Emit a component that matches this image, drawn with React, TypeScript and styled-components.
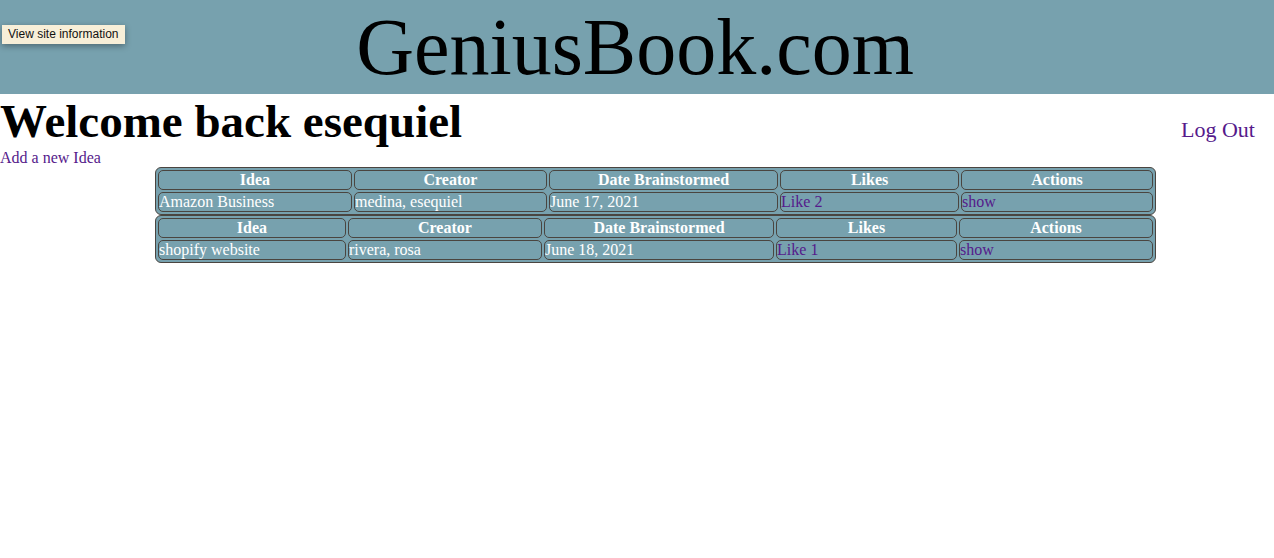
import React from "react";
import styled, { createGlobalStyle } from "styled-components";

type Idea = {
  name: string;
  creator: string;
  date: string;
  likes: number;
  cols: number[];
};

const ideas: Idea[] = [
  {
    name: "Amazon Business",
    creator: "medina, esequiel",
    date: "June 17, 2021",
    likes: 2,
    cols: [193, 192, 228, 178, 191],
  },
  {
    name: "shopify website",
    creator: "rivera, rosa",
    date: "June 18, 2021",
    likes: 1,
    cols: [187, 193, 229, 180, 193],
  },
];

const headings = ["Idea", "Creator", "Date Brainstormed", "Likes", "Actions"];

const GlobalStyle = createGlobalStyle`
  body {
    margin: 0;
    background: #ffffff;
    font-family: "Liberation Serif", "Times New Roman", serif;
    font-size: 16px;
  }
`;

const Header = styled.header`
  position: relative;
  height: 94px;
  background-color: #77a1ae;
  display: flex;
  justify-content: center;
  align-items: flex-start;
`;

const Brand = styled.div`
  font-size: 80px;
  line-height: 1;
  margin-top: 7px;
  margin-right: 4px;
  color: #000;
`;

const SiteInfo = styled.div`
  position: absolute;
  left: 2px;
  top: 25px;
  padding: 2px 6px;
  background: #f7efd8;
  font-family: "Liberation Sans", Arial, sans-serif;
  font-size: 12px;
  line-height: 15px;
  color: #111;
  box-shadow: 0 2px 6px rgba(0, 0, 0, 0.35);
`;

const TopRow = styled.div`
  display: flex;
  justify-content: space-between;
  align-items: baseline;
  padding-right: 19px;
`;

const Welcome = styled.h1`
  margin: 0;
  font-size: 47px;
  font-weight: bold;
  line-height: 55px;
`;

const Link = styled.a<{ $size?: number }>`
  color: #551a8b;
  text-decoration: none;
  font-size: ${(p) => (p.$size ? `${p.$size}px` : "inherit")};
`;

const AddLink = styled.div`
  line-height: 18px;
`;

const Table = styled.table`
  margin-left: 155px;
  width: 1001px;
  background-color: #77a1ae;
  border: 1px solid #4a4540;
  border-radius: 6px;
  border-spacing: 2px;
  color: #fff;
`;

const Th = styled.th`
  padding: 0;
  border: 1px solid #4a4540;
  border-radius: 5px;
  font-weight: bold;
  text-align: center;
  line-height: 18px;
`;

const Td = styled.td`
  padding: 0;
  border: 1px solid #4a4540;
  border-radius: 5px;
  text-align: left;
  line-height: 18px;
`;

const IdeaTable: React.FC<{ idea: Idea }> = ({ idea }) => (
  <Table>
    <colgroup>
      {idea.cols.map((w, i) => (
        <col key={i} style={{ width: w }} />
      ))}
    </colgroup>
    <thead>
      <tr>
        {headings.map((h) => (
          <Th key={h}>{h}</Th>
        ))}
      </tr>
    </thead>
    <tbody>
      <tr>
        <Td>{idea.name}</Td>
        <Td>{idea.creator}</Td>
        <Td>{idea.date}</Td>
        <Td>
          <Link href="#">Like {idea.likes}</Link>
        </Td>
        <Td>
          <Link href="#">show</Link>
        </Td>
      </tr>
    </tbody>
  </Table>
);

export default function App() {
  return (
    <>
      <GlobalStyle />
      <Header>
        <Brand>GeniusBook.com</Brand>
        <SiteInfo>View site information</SiteInfo>
      </Header>
      <TopRow>
        <Welcome>Welcome back esequiel</Welcome>
        <Link href="#" $size={22}>
          Log Out
        </Link>
      </TopRow>
      <AddLink>
        <Link href="#">Add a new Idea</Link>
      </AddLink>
      {ideas.map((idea) => (
        <IdeaTable key={idea.name} idea={idea} />
      ))}
    </>
  );
}
